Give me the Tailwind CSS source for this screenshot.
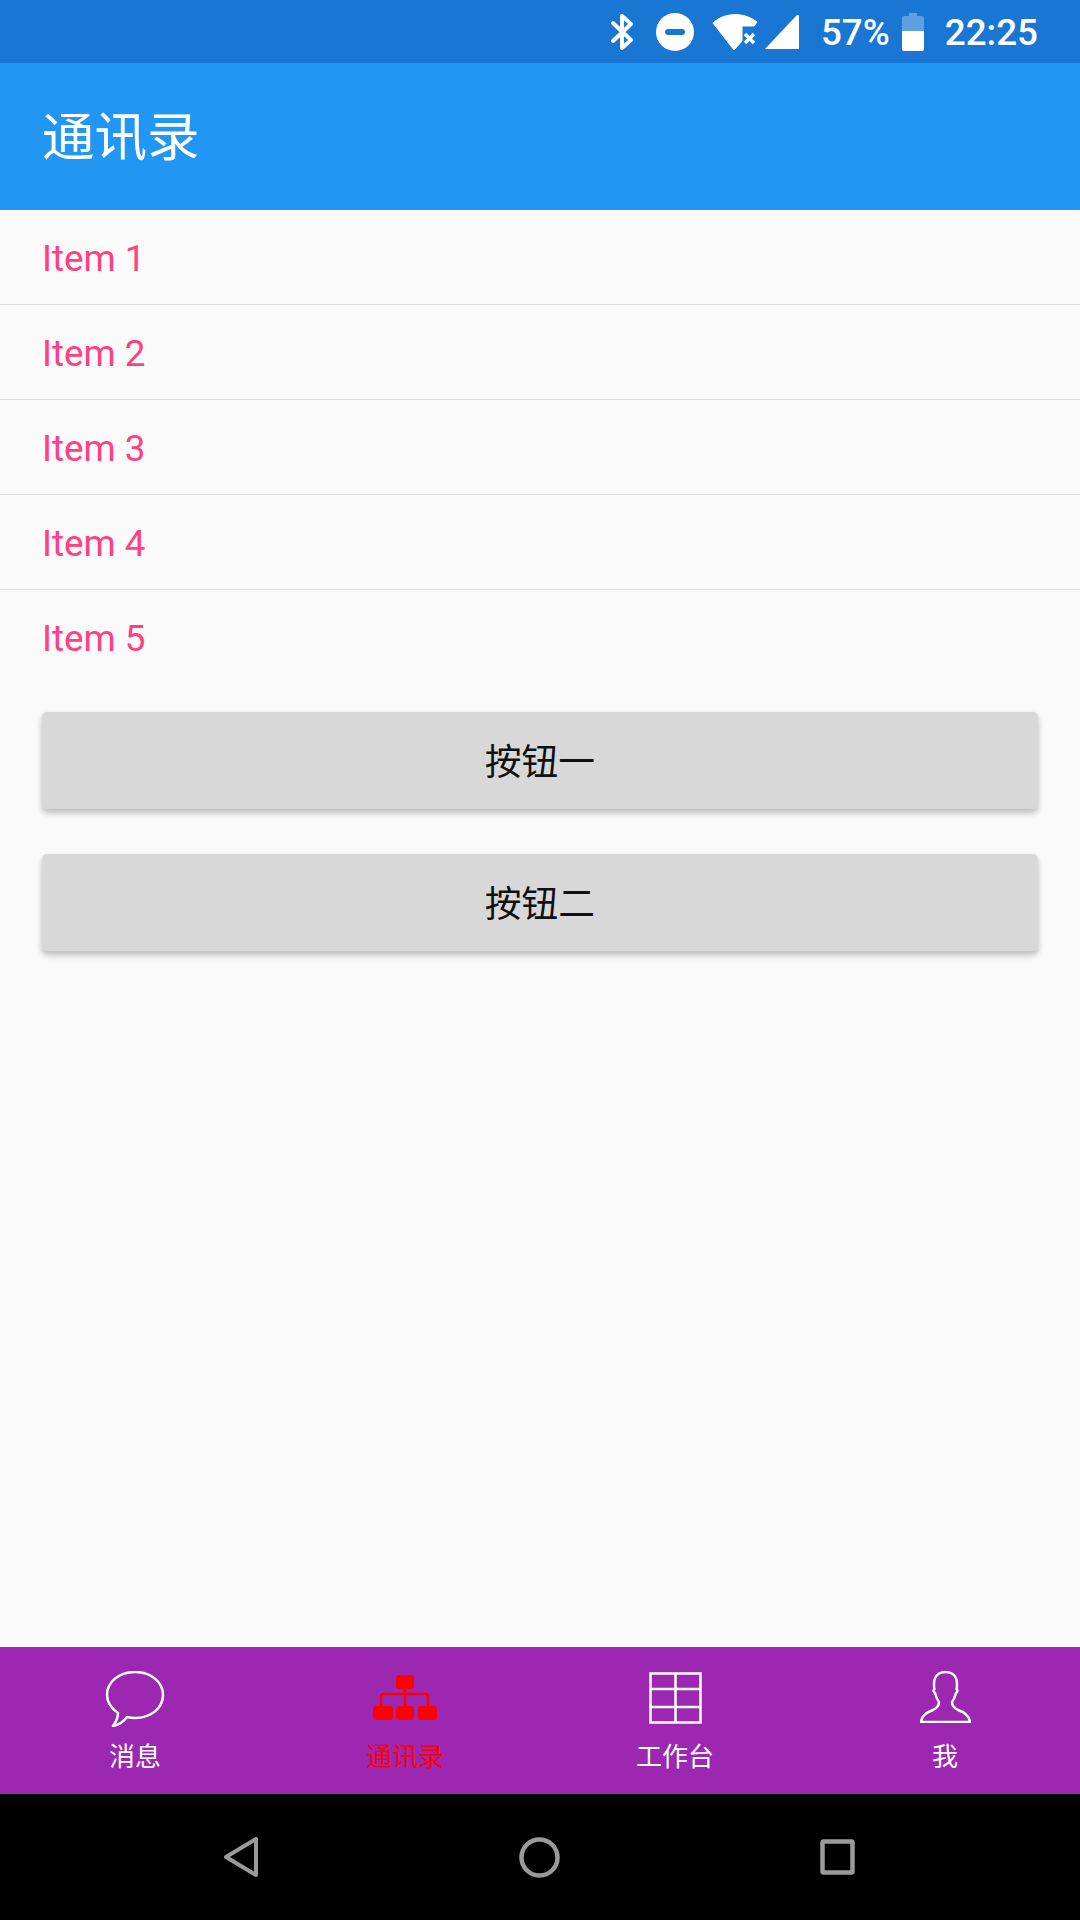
<!DOCTYPE html>
<html lang="zh-CN">
<head>
    <meta charset="UTF-8">
    <meta name="viewport" content="width=device-width, initial-scale=1.0">
    <title>通讯录</title>
    <script src="https://cdn.jsdelivr.net/npm/@tailwindcss/browser@4"></script>
</head>
<body class="bg-[#fafafa] font-['Roboto','Noto_Sans_CJK_SC',sans-serif]">
    <div class="w-[1080px] h-[1920px] flex flex-col overflow-hidden">

        <!-- status bar -->
        <div class="h-[63px] bg-[#1976d2] flex items-center justify-end pr-[42px] text-white">
            <svg class="w-[24px] h-[38px] mr-[22px]" viewBox="0 0 24 38" fill="none" stroke="white" stroke-width="4" stroke-linejoin="round" stroke-linecap="round">
                <path d="M3 10 L21 27 L12 35 L12 3 L21 11 L3 28"/>
            </svg>
            <svg class="w-[38px] h-[38px] mr-[18px]" viewBox="0 0 38 38">
                <circle cx="19" cy="19" r="19" fill="white"/>
                <rect x="9" y="16" width="20" height="6" rx="3" fill="#1976d2"/>
            </svg>
            <svg class="w-[46px] h-[36px]" viewBox="0 0 46 36">
                <path d="M1 9 C13 -2 32 -2 45 8 L42 12 L30 12 L30 27 L22 36 Z" fill="white" stroke="white" stroke-width="1" stroke-linejoin="round"/>
                <path d="M33 20 L42 29 M42 20 L33 29" stroke="white" stroke-width="3.5"/>
            </svg>
            <svg class="w-[35px] h-[35px] ml-[6px] mr-[22px]" viewBox="0 0 35 35">
                <path d="M1 35 L32 2 Q35 -1 35 3 L35 35 Z" fill="white"/>
            </svg>
            <span class="text-[36.75px] font-medium leading-none mt-[4px]">57%</span>
            <svg class="w-[22px] h-[38px] ml-[12px] mr-[21px]" viewBox="0 0 22 38">
                <path d="M7 0 H15 V3 H20 Q22 3 22 5 V18 H0 V5 Q0 3 2 3 H7 Z" fill="white" fill-opacity="0.3"/>
                <path d="M0 18 H22 V36 Q22 38 20 38 H2 Q0 38 0 36 Z" fill="white"/>
            </svg>
            <span class="text-[36.75px] font-medium leading-none mt-[4px]">22:25</span>
        </div>

        <!-- app bar -->
        <div class="h-[147px] bg-[#2196f3] flex items-center px-[42px]">
            <h1 class="text-[52.5px] text-white leading-none mt-[4px]">通讯录</h1>
        </div>

        <!-- list -->
        <ul class="text-[36.75px] text-[#ff4081]">
            <li class="h-[95px] pl-[42px] pt-[4px] flex items-center border-b border-[#dcdcdc]">Item 1</li>
            <li class="h-[95px] pl-[42px] pt-[4px] flex items-center border-b border-[#dcdcdc]">Item 2</li>
            <li class="h-[95px] pl-[42px] pt-[4px] flex items-center border-b border-[#dcdcdc]">Item 3</li>
            <li class="h-[95px] pl-[42px] pt-[4px] flex items-center border-b border-[#dcdcdc]">Item 4</li>
            <li class="h-[95px] pl-[42px] pt-[4px] pb-px flex items-center">Item 5</li>
        </ul>

        <!-- buttons -->
        <div class="flex flex-col gap-[45px] px-[42px] pt-[27px] flex-1">
            <button class="h-[97px] pt-[4px] bg-[#d8d8d8] rounded-[5px] text-[36.75px] text-[#111] shadow-[0_4px_6px_rgba(0,0,0,0.25)]">按钮一</button>
            <button class="h-[97px] pt-[4px] bg-[#d8d8d8] rounded-[5px] text-[36.75px] text-[#111] shadow-[0_4px_6px_rgba(0,0,0,0.25)]">按钮二</button>
        </div>

        <!-- bottom tabs -->
        <div class="h-[147px] bg-[#9c27b0] grid grid-cols-4 text-white text-[26px]">
            <div class="flex flex-col items-center pt-[24px]">
                <div class="h-[56px]">
                    <svg class="w-[60px] h-[56px]" viewBox="0 0 60 56" fill="none" stroke="white" stroke-width="2.5" stroke-linejoin="round">
                        <path d="M30 1 C46 1 58 11 58 24 C58 37 46 47 30 47 C27 47 24 46.5 22 46 C19 50 13 54 8 55 C11 51 13 46 13 42 C6 37 2 31 2 24 C2 11 14 1 30 1 Z"/>
                    </svg>
                </div>
                <span class="mt-[12px] leading-[36px]">消息</span>
            </div>
            <div class="flex flex-col items-center pt-[24px] text-[#ff0000]">
                <div class="h-[56px]">
                    <svg class="w-[64px] h-[50px]" viewBox="0 0 64 50" fill="none" stroke="#ff0000" stroke-width="2.5">
                        <rect x="23" y="4" width="18" height="14" rx="3" fill="#ff0000" stroke="none"/>
                        <rect x="0" y="35" width="20" height="14" rx="3" fill="#ff0000" stroke="none"/>
                        <rect x="23" y="35" width="18" height="14" rx="3" fill="#ff0000" stroke="none"/>
                        <rect x="45" y="35" width="19" height="14" rx="3" fill="#ff0000" stroke="none"/>
                        <path d="M32 18 V35 M8 35 V26 Q8 23 11 23 H52 Q55 23 55 26 V35"/>
                    </svg>
                </div>
                <span class="mt-[12px] leading-[36px]">通讯录</span>
            </div>
            <div class="flex flex-col items-center pt-[24px]">
                <div class="h-[56px]">
                    <svg class="w-[53px] h-[52px] mt-[1px]" viewBox="0 0 53 52" fill="none" stroke="white" stroke-width="2.5">
                        <rect x="1.5" y="1.5" width="50" height="49"/>
                        <path d="M26.5 1.5 V50.5 M1.5 17 H51.5 M1.5 35 H51.5"/>
                    </svg>
                </div>
                <span class="mt-[12px] leading-[36px]">工作台</span>
            </div>
            <div class="flex flex-col items-center pt-[24px]">
                <div class="h-[56px]">
                    <svg class="w-[51px] h-[52px]" viewBox="0 0 51 52" fill="none" stroke="white" stroke-width="2.5" stroke-linejoin="round">
                        <path d="M25.5 1 C33 1 37 6 37 13 C37 15 37 17 36.5 18 C38 19 37.5 21 36 22 C35 26 33.5 29 32 31 C32 35 34 37 38 39 C44 41 49 44 50 51 H1 C2 44 7 41 13 39 C17 37 19 35 19 31 C17.5 29 16 26 15 22 C13.5 21 13 19 14.5 18 C14 17 14 15 14 13 C14 6 18 1 25.5 1 Z"/>
                    </svg>
                </div>
                <span class="mt-[12px] leading-[36px]">我</span>
            </div>
        </div>

        <!-- nav bar -->
        <div class="h-[126px] bg-black flex justify-between items-center pl-[224px] pr-[225px]">
            <svg class="w-[34px] h-[40px]" viewBox="0 0 34 40" fill="none" stroke="#9a9a9a" stroke-width="4" stroke-linejoin="round">
                <path d="M32 2 V38 L2 20 Z"/>
            </svg>
            <svg class="w-[41px] h-[41px]" viewBox="0 0 41 41" fill="none" stroke="#9a9a9a" stroke-width="4.5">
                <circle cx="20.5" cy="20.5" r="18"/>
            </svg>
            <svg class="w-[35px] h-[36px]" viewBox="0 0 35 36" fill="none" stroke="#9a9a9a" stroke-width="4.5" stroke-linejoin="round">
                <rect x="2.5" y="2.5" width="30" height="31" rx="1"/>
            </svg>
        </div>
    </div>
</body>
</html>
